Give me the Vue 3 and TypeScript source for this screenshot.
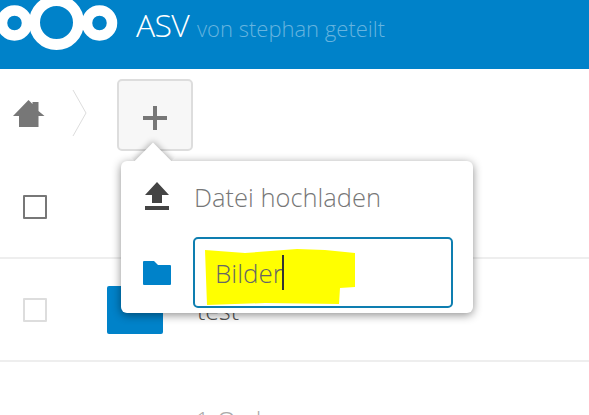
<script setup lang="ts">
</script>

<template>
  <div class="page">
    <header class="top">
      <svg class="logo" width="119" height="69" viewBox="0 0 119 69">
        <circle cx="14.5" cy="23" r="12.5" fill="none" stroke="#fff" stroke-width="10.5" />
        <circle cx="56.5" cy="22.5" r="22" fill="none" stroke="#fff" stroke-width="11" />
        <circle cx="99.5" cy="23" r="12.5" fill="none" stroke="#fff" stroke-width="10.5" />
      </svg>
      <span class="name">ASV</span>
      <span class="owner">von stephan geteilt</span>
    </header>
    <div class="controls">
      <svg class="home" width="32" height="28" viewBox="0 0 32 28">
        <path d="M0 16 15.500 0l4 4V2h6v9l6 5h-6v11H6V16z" fill="#777" />
      </svg>
      <svg class="crumb" width="16" height="48" viewBox="0 0 16 48">
        <path d="M1 1l13 23L1 47" fill="none" stroke="#ddd" stroke-width="1" />
      </svg>
      <button class="add" type="button" aria-label="Neu">
        <svg width="24" height="24" viewBox="0 0 24 24"><path d="M0 10h24v4H0zM10 0h4v24h-4z" fill="#777" /></svg>
      </button>
    </div>
    <div class="table">
      <div class="row row-head"><span class="check check-dark"></span></div>
      <div class="row">
        <span class="check"></span>
        <span class="folder"></span>
        <span class="fname">test</span>
      </div>
    </div>
    <div class="summary">1 Ordner</div>

    <div class="pop">
      <span class="arrow"></span>
      <div class="item first">
        <svg class="ico" width="28" height="32" viewBox="0 0 28 32">
          <path d="M14 1l12 13h-7v8H9v-8H2zM2 25h24v4H2z" fill="#444" />
        </svg>
        <span class="label">Datei hochladen</span>
      </div>
      <div class="item second">
        <svg class="ico" width="28" height="24" viewBox="0 0 28 24">
          <path d="M0 1q0-1 1-1h10l4 4h12q1 0 1 1v18q0 1-1 1H1q-1 0-1-1z" fill="#0082c9" />
        </svg>
        <div class="field">
          <span class="mark"></span>
          <span class="typed">Bilder</span><span class="caret"></span>
        </div>
      </div>
    </div>
  </div>
</template>

<style>
html, body { margin: 0; background: #fff; overflow: hidden; }
</style>

<style scoped>
.page {
  position: relative;
  width: 589px;
  height: 415px;
  overflow: hidden;
  font-family: "Open Sans Light", "Open Sans", "Noto Sans", sans-serif;
  font-weight: 300;
  color: #555;
}
.top {
  height: 69px;
  background: #0082c9;
  display: flex;
  align-items: baseline;
  overflow: hidden;
}
.logo { flex: none; align-self: flex-start; margin-right: 17px; }
.name { color: #fff; font-size: 32px; line-height: 50px; letter-spacing: -0.7px; }
.owner { color: #66b4df; font-size: 22px; margin-left: 8px; }
.controls {
  height: 88px;
  display: flex;
  align-items: flex-start;
  box-sizing: border-box;
  padding: 10px 0 0 13px;
}
.home { margin-top: 21px; }
.crumb { margin: 10px 0 0 27px; }
.add {
  margin-left: 29px;
  width: 76px;
  height: 72px;
  padding: 6px 0 0;
  box-sizing: border-box;
  background: #f7f7f7;
  border: 2px solid #ddd;
  border-radius: 5px;
  display: flex;
  align-items: center;
  justify-content: center;
}
.table { display: block; }
.row {
  height: 103px;
  border-bottom: 2px solid #eee;
  box-sizing: border-box;
  display: flex;
  align-items: center;
  padding-left: 23px;
  position: relative;
}
.row-head { height: 102px; }
.check {
  width: 24px;
  height: 24px;
  box-sizing: border-box;
  border: 2px solid #ddd;
  border-radius: 1px;
  flex: none;
}
.check-dark { border-color: #777; }
.folder {
  width: 56px;
  height: 48px;
  margin-left: 60px;
  background: #0082c9;
  border-radius: 2px;
  flex: none;
}
.fname { margin-left: 34px; font-size: 25px; }
.summary {
  margin: 40px 0 0 195px;
  font-size: 26px;
  color: #aaa;
  line-height: 36px;
}
.pop {
  position: absolute;
  left: 121px;
  top: 161px;
  width: 352px;
  height: 152px;
  background: #fff;
  border-radius: 6px;
  box-shadow: 0 2px 10px rgba(0, 0, 0, 0.45);
  box-sizing: border-box;
}
.arrow {
  position: absolute;
  left: 19px;
  top: -13px;
  width: 26px;
  height: 26px;
  background: #fff;
  transform: rotate(45deg);
  box-shadow: -1px -1px 6px rgba(0, 0, 0, 0.3);
  clip-path: polygon(-40% -40%, 100% -40%, 100% 0, 0 100%, -40% 100%);
}
.item {
  display: flex;
  align-items: center;
  padding-left: 22px;
  position: relative;
}
.first { height: 72px; }
.second { height: 79px; }
.ico { flex: none; }
.label { font-size: 25.5px; margin-left: 23px; color: #777; }
.field {
  position: relative;
  margin-left: 22px;
  width: 260px;
  height: 71px;
  box-sizing: border-box;
  border: 2px solid #0e7eb0;
  border-radius: 5px;
  padding-left: 20px;
  display: flex;
  align-items: center;
  font-size: 26px;
}
.mark {
  position: absolute;
  left: 10px;
  top: 10px;
  width: 150px;
  height: 56px;
  background: #ffff00;
  clip-path: polygon(0 1px, 40px 4px, 92px 0, 120px 1px, 150px 4px, 150px 38px, 135px 39px, 134px 55px, 60px 54px, 2px 56px);
}
.typed { position: relative; color: #666; }
.caret { position: relative; width: 2px; height: 35px; background: #333; margin-left: -1px; }
</style>
